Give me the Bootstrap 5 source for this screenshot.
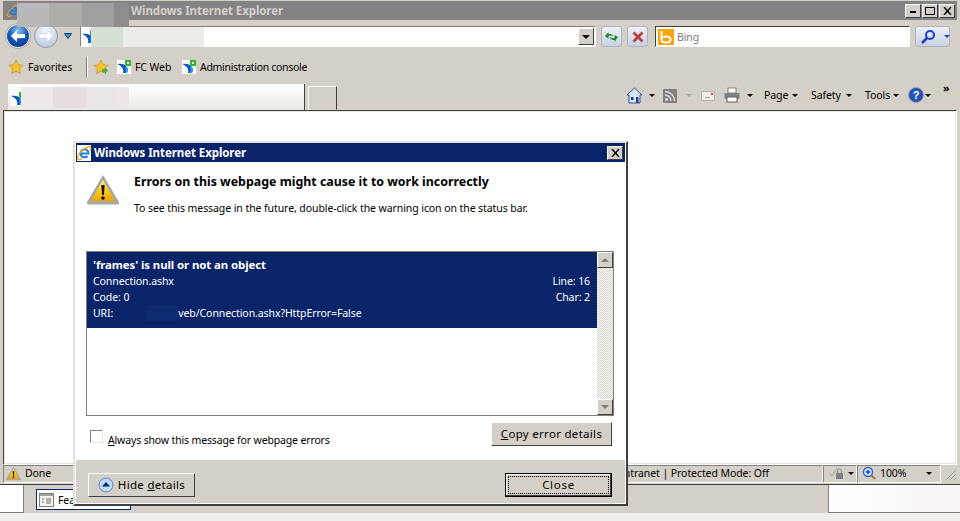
<!DOCTYPE html>
<html lang="en">
<head>
  <meta charset="UTF-8">
  <title>Windows Internet Explorer</title>
  <link href="https://cdn.jsdelivr.net/npm/bootstrap@5.3.3/dist/css/bootstrap.min.css" rel="stylesheet">
  <style>
    html, body { height: 521px; overflow: hidden; }
    body { background: #d4d0c8; font-family: "Noto Sans", "Liberation Sans", sans-serif; font-size: 10.5px; letter-spacing: -.08px; line-height: 14px; color: #000; position: relative; }
    svg { display: block; flex: none; }

    /* browser window */
    .ie-win { height: 485px; padding: 0 3px; border-bottom: 1px solid #404040; }
    .ie-title { height: 19px; background: #848284; color: #d4d0c8; font-weight: 700; font-size: 11.5px; padding-left: 128px; position: relative; margin-top: 1px; }
    .blur-title { position: absolute; left: 14px; top: 2px; height: 24px; width: 112px; background: linear-gradient(90deg, #b8b8bb 0 29%, #adadaa 29% 58%, #a09e9e 58% 87%, #8e8c8c 87%); z-index: 2; }
    .win-btns { gap: 1px; padding-right: 2px; }
    .win-btn { width: 16px; height: 14px; background: #d4d0c8; border: 1px solid; border-color: #fff #404040 #404040 #fff; color: #000; }
    .addr-row { height: 29px; padding-top: 5px; position: relative; }
    .addr-box { position: absolute; left: 77px; top: 6px; width: 516px; height: 21px; background: #fff; border: 1px solid; border-color: #808080 #fff #fff #808080; }
    .addr-drop { position: absolute; right: 1px; top: 1px; width: 16px; height: 17px; background: #d4d0c8; border: 1px solid; border-color: #fff #404040 #404040 #fff; }
    .blur-a { position: absolute; left: 10px; top: 0; height: 20px; width: 113px; background: linear-gradient(90deg, #d6e0d4 0 28%, #ecece9 28%); }
    .glass { position: absolute; top: 6px; height: 21px; width: 21px; border: 1px solid #b0b4bc; border-radius: 3px; background: linear-gradient(#eef1f8, #c8d0e2); }
    .search-box { position: absolute; left: 652px; top: 6px; width: 255px; height: 21px; background: #fff; border: 1px solid; border-color: #404040 #fff #fff #404040; color: #7a7a7a; }
    .search-go { position: absolute; left: 912px; top: 6px; width: 35px; height: 21px; border: 1px solid #b0b4bc; border-radius: 3px; background: linear-gradient(#eef1f8, #c8d0e2); }
    .fav-row { height: 32px; padding: 4px 0 0 5px; }
    .fav-sep { height: 20px; background: #808080; border-right: 1px solid #fff; width: 2px; margin: 0 5px 0 12px; }
    .fav-long { letter-spacing: -.3px; }
    .tab-row { height: 29px; position: relative; }
    .tab-main { position: absolute; left: 5px; top: 3px; width: 297px; height: 26px; background: linear-gradient(#fff, #ebe9e4); border-right: 1px solid #404040; }
    .blur-t { position: absolute; left: 13px; top: 3px; height: 21px; width: 108px; background: linear-gradient(90deg, #efeaea 0 30%, #e6dede 30% 60%, #e9e6e6 60% 90%, #efe7e7 90%); }
    .tab-new { position: absolute; left: 305px; top: 5px; width: 29px; height: 24px; border: 1px solid; border-color: #fff #404040 transparent #fff; }
    .tool-strip { position: absolute; right: 0; top: 0; height: 29px; width: 334px; }
    .tool-strip > * { position: absolute; }
    .ie-tri { width: 0; height: 0; border-left: 3px solid transparent; border-right: 3px solid transparent; border-top: 3px solid #000; }
    .tri-off { border-top-color: #a5a5a5; }

    .ie-view { height: 355px; background: #fff; border: 1px solid; border-color: #404040 #fff #fff #404040; outline: 1px solid #e8e6e0; outline-offset: -2px; }
    .ie-status { height: 19px; }
    .st-cell { height: 18px; border: 1px solid; border-color: #808080 #fff #fff #808080; padding-bottom: 2px; }

    .task-row { height: 28px; }
    .task-start { width: 24px; background: #fff; border: 1px solid #808080; border-left: 0; border-top: 0; height: 28px; }
    .task-btn { width: 95px; height: 21px; margin: 4px 0 0 12px; border: 1px solid #0a246a; background: #fff; padding-left: 2px; }
    .task-tray { width: 132px; height: 28px; background: linear-gradient(90deg, #fff, #faf4f4); border-left: 1px solid #808080; border-bottom: 1px solid #808080; }
    .desk-band { height: 8px; background: #f3eeec; }

    /* dialog */
    .err-dlg { position: absolute; left: 73px; top: 141px; width: 555px; height: 365px; background: #fff; border: 2px solid; border-color: #e4e2dc #404040 #404040 #e4e2dc; padding: 0 1px 1px; z-index: 5; }
    .dlg-title { height: 19px; background: #0a246a; color: #fff; font-weight: 700; font-size: 11.5px; padding-right: 2px; }
    .dlg-x { width: 16px; height: 14px; background: #d4d0c8; border: 1px solid; border-color: #fff #404040 #404040 #fff; }
    .dlg-main { height: 298px; padding: 13px 13px 0 10px; }
    .dlg-warn { margin: 0 15px 0 1px; }
    .dlg-head { font-weight: 700; font-size: 12.4px; letter-spacing: 0; line-height: 15px; }
    .err-list { height: 165px; width: 528px; border: 1px solid #808080; margin-top: 36px; }
    .err-sel { height: 76px; background: #0a246a; color: #fff; padding: 5px 7px 5px 6px; line-height: 16px; }
    .err-sel b { font-size: 11.4px; }
    .blur-uri { display: inline-block; width: 31px; height: 16px; background: #0e2a70; margin-left: 34px; vertical-align: top; }
    .err-scroll { width: 16px; background: repeating-conic-gradient(#d4d0c8 0 25%, #fff 0 50%) 0 0 / 2px 2px; }
    .scr-btn { height: 16px; background: #d4d0c8; border: 1px solid; border-color: #fff #404040 #404040 #fff; }
    .err-row { margin-top: 6px; }
    .chk-box { width: 13px; height: 13px; border: 1px solid; border-color: #808080 #e8e6e0 #e8e6e0 #808080; background: #fff; }
    .chk-label { margin: 3px 0 0 5px; letter-spacing: -.15px; }
    .win-button { height: 24px; font-size: 11.5px; background: #d4d0c8; border: 1px solid; border-color: #fff #404040 #404040 #fff; letter-spacing: .3px; color: #000; padding: 0; }
    .dlg-foot { height: 43px; background: #d4d0c8; padding: 13px 13px 0 12px; }
    .close-btn { width: 107px; border-color: #000; box-shadow: inset -1px -1px #404040, inset 1px 1px #fff; position: relative; letter-spacing: .7px; }
    .close-btn::after { content: ""; position: absolute; inset: 2px; border: 1px dotted #000; }
    .ul-key { text-decoration: underline; }
  </style>
</head>
<body>
  <svg width="0" height="0" class="position-absolute">
    <defs>
      <symbol id="site-ic" viewBox="0 0 14 14">
        <rect width="14" height="14" fill="#fff"/>
        <path d="M0 4c4-1 8 0 10 3 1 2 1 4 0 6H6c1-4-1-7-6-9z" fill="#0b55c4"/>
        <path d="M8 13c1-2 1-4 0-6l2 0c1 2 1 4 0 6z" fill="#3a9aec"/>
        <rect x="8" y="0" width="6" height="6" fill="#2fb52f"/>
        <rect x="10" y="2" width="2" height="2" fill="#fff"/>
      </symbol>
      <linearGradient id="warn-g" x1="0" y1="0" x2="0" y2="1"><stop offset="0" stop-color="#fff27a"/><stop offset=".55" stop-color="#fcc80c"/><stop offset="1" stop-color="#f0a400"/></linearGradient>
      <symbol id="warn-ic" viewBox="0 0 32 30">
        <path d="M16 0 32 27q.5 2.500-1.500 2.500h-29Q-.5 29.500 0 27z" fill="#a8a8a0"/>
        <path d="M16 5 28 26H4z" fill="url(#warn-g)"/>
        <path d="M14.300 10h3.400l-.8 10h-1.800z" fill="#111"/>
        <circle cx="16" cy="23" r="1.800" fill="#111"/>
      </symbol>
      <symbol id="star-ic" viewBox="0 0 16 16">
        <path d="M8 1l2.200 4.700 5 .6-3.700 3.400 1 5L8 12.200 3.500 14.700l1-5L.8 6.300l5-.6z" fill="#fbc02d" stroke="#b98a1a" stroke-width=".6"/>
      </symbol>
      <symbol id="ie-ic" viewBox="0 0 16 16">
        <path d="M4.500 8.500h8A4 4 0 1 0 11.500 11" fill="none" stroke="#1f7fd8" stroke-width="2"/>
        <path d="M2 14.500C0 11 7 3 13 1.500c2-.5 2.500 2 1 4M2 14.500c1.500.5 3 0 4.500-1" fill="none" stroke="#f0a818" stroke-width="1.200"/>
      </symbol>
    </defs>
  </svg>

  <div class="ie-win d-flex flex-column">
    <div class="ie-title d-flex align-items-center justify-content-between">
      <span>Windows Internet Explorer</span>
      <div class="win-btns d-flex">
        <div class="win-btn d-flex align-items-end justify-content-center pb-1"><svg width="6" height="2"><rect width="6" height="2"/></svg></div>
        <div class="win-btn d-flex align-items-center justify-content-center"><svg width="10" height="9"><path d="M.5 1.500h9v7h-9z" fill="none" stroke="#000"/></svg></div>
        <div class="win-btn d-flex align-items-center justify-content-center"><svg width="9" height="8"><path d="M1 0l7 8M8 0L1 8" stroke="#000" stroke-width="1.400"/></svg></div>
      </div>
      <svg class="position-absolute" style="left:3px;top:1px" width="14" height="17"><use href="#ie-ic"/></svg>
      <div class="blur-title"></div>
    </div>

    <div class="addr-row">
      <svg class="position-absolute" style="left:2px;top:2px" width="56" height="28" viewBox="0 0 56 28">
        <defs>
          <radialGradient id="bk-g" cx=".5" cy=".25" r=".8"><stop offset="0" stop-color="#8fc4f5"/><stop offset=".55" stop-color="#1456b4"/><stop offset="1" stop-color="#0a3a8c"/></radialGradient>
          <radialGradient id="fw-g" cx=".5" cy=".25" r=".8"><stop offset="0" stop-color="#f4f7fd"/><stop offset="1" stop-color="#b6c6e0"/></radialGradient>
        </defs>
        <circle cx="13" cy="14" r="12.500" fill="#eef0f4" stroke="#a8a8a8"/>
        <circle cx="13" cy="14" r="11" fill="url(#bk-g)"/>
        <path d="M6 14l6-6v4h8v4h-8v4z" fill="#fff"/>
        <circle cx="41" cy="14" r="11.500" fill="url(#fw-g)" stroke="#9a9a9a"/>
        <path d="M48 14l-6-6v4h-8v4h8v4z" fill="#fff" stroke="#b8c4d8" stroke-width=".5"/>
      </svg>
      <svg class="position-absolute" style="left:61px;top:13px" width="8" height="6" viewBox="0 0 8 6"><path d="M.5.500h7L4 5.500z" fill="#2a9ae0" stroke="#123a70"/></svg>
      <div class="addr-box">
        <svg class="position-absolute" style="left:1px;top:3px" width="14" height="14"><use href="#site-ic"/></svg>
        <div class="blur-a"></div>
        <div class="addr-drop d-flex align-items-center justify-content-center"><div class="ie-tri" style="border-left-width:4px;border-right-width:4px;border-top-width:4px"></div></div>
      </div>
      <div class="glass d-flex align-items-center justify-content-center" style="left:598px">
        <svg width="15" height="14" viewBox="0 0 15 14"><path d="M1 6l3.500-4v2c2 0 4 .5 5 2-1.500-.5-3-.5-5 0v3z" fill="#1e8a2c"/><path d="M14 7l-3.500 5v-2c-2 0-4-.5-5-3 1.500 1 3 1 5 1V5z" fill="#1e8a2c"/></svg>
      </div>
      <div class="glass d-flex align-items-center justify-content-center" style="left:624px">
        <svg width="12" height="12"><path d="M1.500 1.500l9 9M10.500 1.500l-9 9" stroke="#b8403f" stroke-width="2.800"/></svg>
      </div>
      <div class="search-box d-flex align-items-center">
        <svg style="margin-left:2px" width="16" height="16" viewBox="0 0 16 16"><rect width="16" height="16" fill="#f7a40e"/><path d="M3.500 2v8.500c0 2 2 3 4.500 3s4.500-1 4.500-3-2-3-4.500-3c-1 0-2 .3-3 .8" fill="none" stroke="#fff" stroke-width="2"/></svg>
        <span style="margin-left:3px">Bing</span>
      </div>
      <div class="search-go d-flex align-items-center">
        <svg class="ms-1" width="16" height="16" viewBox="0 0 16 16"><circle cx="10" cy="6" r="4" fill="none" stroke="#1440d8" stroke-width="2"/><path d="M7 9l-5 5" stroke="#1440d8" stroke-width="2.500"/></svg>
        <div class="ie-tri ms-2" style="border-top-color:#1440d8"></div>
      </div>
    </div>

    <div class="fav-row d-flex align-items-center">
      <svg width="16" height="16"><use href="#star-ic"/></svg>
      <span class="ms-1" style="width:46px">Favorites</span>
      <div class="fav-sep"></div>
      <svg width="16" height="16" viewBox="0 0 16 16"><use href="#star-ic"/><path d="M9 10h3V8l3 3.500-3 3.500v-2H9z" fill="#46b040"/></svg>
      <svg class="ms-2" width="14" height="14"><use href="#site-ic"/></svg>
      <span class="ms-1" style="width:47px">FC Web</span>
      <svg width="14" height="14"><use href="#site-ic"/></svg>
      <span class="ms-1 fav-long">Administration console</span>
    </div>

    <div class="tab-row">
      <div class="tab-main">
        <svg class="position-absolute" style="left:3px;top:8px" width="14" height="14"><use href="#site-ic"/></svg>
        <div class="blur-t"></div>
      </div>
      <div class="tab-new"></div>
      <div class="tool-strip">
        <svg style="left:3px;top:6px" width="17" height="17" viewBox="0 0 17 17"><path d="M8.500 1 1 8h2v8h11V8h2z" fill="#dbe6f8" stroke="#2a50a8"/><rect x="5" y="10" width="2.500" height="3" fill="#223e88"/><rect x="10" y="10" width="2.500" height="6" fill="#223e88"/></svg>
        <div class="ie-tri" style="left:26px;top:13px"></div>
        <svg style="left:40px;top:8px" width="14" height="14" viewBox="0 0 14 14"><rect width="14" height="14" rx="1" fill="#808080"/><circle cx="3.500" cy="10.500" r="1.500" fill="#e0e0e0"/><path d="M2 6a6 6 0 0 1 6 6M2 2.500A9.500 9.500 0 0 1 11.500 12" fill="none" stroke="#e0e0e0" stroke-width="1.500"/></svg>
        <div class="ie-tri tri-off" style="left:63px;top:13px"></div>
        <svg style="left:78px;top:10px" width="14" height="10" viewBox="0 0 14 10"><rect x=".5" y=".5" width="13" height="9" fill="#f2f0ec" stroke="#b4b2ac"/><rect x="4" y="6" width="5" height="1" fill="#a0a0a0"/><rect x="10" y="2" width="2" height="2" fill="#d83030"/></svg>
        <svg style="left:101px;top:6px" width="16" height="16" viewBox="0 0 16 16"><rect x="4" y="1" width="8" height="5" fill="#fff" stroke="#808080"/><rect x=".5" y="6" width="15" height="6" rx="1" fill="#7a8088"/><rect x="3" y="10" width="10" height="5" fill="#fff" stroke="#606060"/><rect x="12" y="7" width="2" height="1" fill="#40c040"/></svg>
        <div class="ie-tri" style="left:124px;top:13px"></div>
        <span style="left:141px;top:7px">Page</span>
        <div class="ie-tri" style="left:169px;top:13px"></div>
        <span style="left:188px;top:7px">Safety</span>
        <div class="ie-tri" style="left:223px;top:13px"></div>
        <span style="left:242px;top:7px">Tools</span>
        <div class="ie-tri" style="left:270px;top:13px"></div>
        <svg style="left:285px;top:6px" width="16" height="16" viewBox="0 0 16 16"><circle cx="8" cy="8" r="7.500" fill="#2450b8" stroke="#a0a0a8"/><text x="8" y="12" text-anchor="middle" font-size="11" font-weight="700" fill="#fff" font-family="Liberation Sans">?</text></svg>
        <div class="ie-tri" style="left:302px;top:13px"></div>
        <span style="left:320px;top:0;font-weight:700;letter-spacing:-1px">»</span>
      </div>
    </div>

    <div class="ie-view"></div>

    <div class="ie-status d-flex align-items-start">
      <div class="st-cell d-flex align-items-center" style="width:820px;padding-left:2px">
        <svg width="15" height="15" viewBox="0 0 32 30"><use href="#warn-ic"/></svg>
        <span style="margin-left:4px">Done</span>
        <span class="ms-auto" style="margin-right:53px">Local intranet | Protected Mode: Off</span>
      </div>
      <div class="st-cell d-flex align-items-center ps-1" style="width:34px">
        <svg width="16" height="14" viewBox="0 0 16 14"><path d="M1 7l3 3 5-8" fill="none" stroke="#b8b8b8" stroke-width="1.500"/><rect x="8" y="7" width="7" height="6" fill="#808080"/><path d="M9.500 7V5a2 2 0 0 1 4 0v2" fill="none" stroke="#808080"/></svg>
        <div class="ie-tri ms-1"></div>
      </div>
      <div class="st-cell d-flex align-items-center ps-1" style="width:84px">
        <svg width="14" height="14" viewBox="0 0 14 14"><circle cx="6" cy="6" r="4.500" fill="#cfe0f8" stroke="#2a60c8" stroke-width="1.400"/><path d="M4 6h4M6 4v4" stroke="#1440b0" stroke-width="1.400"/><path d="M9 9l4 4" stroke="#a07a40" stroke-width="2"/></svg>
        <span class="ms-1" style="width:46px">100%</span>
        <div class="ie-tri"></div>
      </div>
      <svg class="ms-1" width="12" height="16" viewBox="0 0 12 16"><path d="M1 15l10-10M5 15l6-6M9 15l2-2" stroke="#a0a0a0"/></svg>
    </div>
  </div>

  <div class="task-row d-flex">
    <div class="task-start"></div>
    <div class="task-btn d-flex align-items-center">
      <svg width="15" height="14" viewBox="0 0 15 14"><rect x=".5" y=".5" width="14" height="13" fill="#f4f2ee" stroke="#808080"/><rect x="1" y="1" width="13" height="2" fill="#a0a0a0"/><path d="M3 6h2M3 9h2M7 6h5M7 8h5M7 10h5" stroke="#707070"/></svg>
      <span class="ms-1">Features</span>
    </div>
    <div class="task-tray ms-auto"></div>
  </div>
  <div class="desk-band"></div>

  <div class="err-dlg d-flex flex-column">
    <div class="dlg-title d-flex align-items-center justify-content-between">
      <div class="d-flex align-items-center" style="gap:2px">
        <svg width="16" height="16" viewBox="0 0 16 16"><rect x="1" width="14" height="16" fill="#fff"/><use href="#ie-ic"/></svg>
        <span>Windows Internet Explorer</span>
      </div>
      <div class="dlg-x d-flex align-items-center justify-content-center"><svg width="9" height="8"><path d="M1 0l7 8M8 0L1 8" stroke="#000" stroke-width="1.400"/></svg></div>
    </div>

    <div class="dlg-main d-flex flex-column">
      <div class="d-flex">
        <svg class="dlg-warn" width="32" height="30" viewBox="0 0 32 30"><use href="#warn-ic"/></svg>
        <div>
          <div class="dlg-head" style="margin-top:-1px">Errors on this webpage might cause it to work incorrectly</div>
          <div style="margin-top:12px">To see this message in the future, double-click the warning icon on the status bar.</div>
        </div>
      </div>

      <div class="err-list d-flex">
        <div class="flex-grow-1">
          <div class="err-sel">
            <b>'frames' is null or not an object</b>
            <div class="d-flex justify-content-between"><span>Connection.ashx</span><span>Line: 16</span></div>
            <div class="d-flex justify-content-between"><span>Code: 0</span><span>Char: 2</span></div>
            <div>URI:<span class="blur-uri"></span>veb/Connection.ashx?HttpError=False</div>
          </div>
        </div>
        <div class="err-scroll d-flex flex-column justify-content-between">
          <div class="scr-btn d-flex align-items-center justify-content-center"><div class="ie-tri" style="border-top:0;border-left-width:4px;border-right-width:4px;border-bottom:4px solid #808080"></div></div>
          <div class="scr-btn d-flex align-items-center justify-content-center"><div class="ie-tri" style="border-left-width:4px;border-right-width:4px;border-top:4px solid #808080"></div></div>
        </div>
      </div>

      <div class="err-row d-flex align-items-start justify-content-between">
        <div class="d-flex align-items-start ms-1 mt-2">
          <div class="chk-box"></div>
          <span class="chk-label"><span class="ul-key">A</span>lways show this message for webpage errors</span>
        </div>
        <button class="win-button" style="width:121px"><span class="ul-key">C</span>opy error details</button>
      </div>
    </div>

    <div class="dlg-foot d-flex justify-content-between">
      <button class="win-button d-flex align-items-center justify-content-center gap-1" style="width:107px">
        <svg width="16" height="16" viewBox="0 0 16 16"><circle cx="8" cy="8" r="7" fill="#bcdcf8" stroke="#5a88c0"/><path d="M8 5l4 4.500H4z" fill="#0a246a"/></svg>
        <span>Hide <span class="ul-key">d</span>etails</span>
      </button>
      <button class="win-button close-btn">Close</button>
    </div>
  </div>

  <script src="https://cdn.jsdelivr.net/npm/bootstrap@5.3.3/dist/js/bootstrap.bundle.min.js"></script>
</body>
</html>
